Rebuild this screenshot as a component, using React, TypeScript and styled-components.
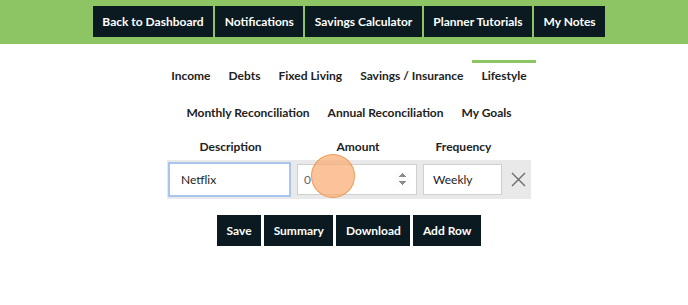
import React from 'react'
import styled, { createGlobalStyle } from 'styled-components'

const GlobalStyle = createGlobalStyle`
  body {
    margin: 0;
    background: #fff;
    font-family: Lato, "Liberation Sans", sans-serif;
    color: #222;
  }
  input[type=number]::-webkit-inner-spin-button {
    opacity: 1;
  }
`

const topLinks = ['Back to Dashboard', 'Notifications', 'Savings Calculator', 'Planner Tutorials', 'My Notes']
const tabsOne = ['Income', 'Debts', 'Fixed Living', 'Savings / Insurance', 'Lifestyle']
const tabsTwo = ['Monthly Reconciliation', 'Annual Reconciliation', 'My Goals']

export default function App() {
    return (
        <Page>
            <GlobalStyle />
            <TopBar>
                {topLinks.map(l => <DarkButton key={l}>{l}</DarkButton>)}
            </TopBar>
            <Main>
                <TabRow $first>
                    {tabsOne.map(t => <Tab key={t} $active={t === 'Lifestyle'}>{t}</Tab>)}
                </TabRow>
                <TabRow>
                    {tabsTwo.map(t => <Tab key={t}>{t}</Tab>)}
                </TabRow>
                <HeaderRow>
                    <HeadCell $w={123}>Description</HeadCell>
                    <HeadCell $w={120}>Amount</HeadCell>
                    <HeadCell $w={79}>Frequency</HeadCell>
                    <HeadCell $w={17} />
                </HeaderRow>
                <Band>
                    <TextInput $w={123} $focused defaultValue="Netflix" />
                    <NumberInput type="number" defaultValue={0} />
                    <TextInput $w={79} defaultValue="Weekly" />
                    <RemoveButton aria-label="remove">
                        <svg width="15" height="15" viewBox="0 0 15 15">
                            <path d="M1 1 L14 14 M14 1 L1 14" stroke="#6b6b6b" strokeWidth="1.4" fill="none" />
                        </svg>
                    </RemoveButton>
                    <ClickMark />
                </Band>
                <Actions>
                    <DarkButton>Save</DarkButton>
                    <DarkButton>Summary</DarkButton>
                    <DarkButton>Download</DarkButton>
                    <DarkButton>Add Row</DarkButton>
                </Actions>
            </Main>
        </Page>
    )
}

const Page = styled.div`
    width: 688px;
    min-height: 305px;
`

const TopBar = styled.div`
    height: 44px;
    box-sizing: border-box;
    padding: 6px 0 0 10px;
    background-color: #8dc565;
    display: flex;
    justify-content: center;
    align-items: flex-start;
    gap: 2px;
`

const DarkButton = styled.button`
    height: 31px;
    padding: 0 9.5px;
    border: none;
    background-color: #0a1a20;
    color: #fff;
    font-family: Lato, "Liberation Sans", sans-serif;
    font-weight: 700;
    font-size: 12px;
    cursor: pointer;
`

const Main = styled.div`
    padding-left: 10px;
    display: flex;
    flex-direction: column;
    align-items: center;
`

const TabRow = styled.div<{ $first?: boolean }>`
    display: flex;
    justify-content: center;
    margin-top: ${p => p.$first ? '16px' : '0'};
`

const Tab = styled.div<{ $active?: boolean }>`
    padding: 5px 9px 13px;
    border-top: 3px solid ${p => p.$active ? '#8dc565' : 'transparent'};
    font-weight: 700;
    font-size: 12px;
    line-height: 16px;
    color: #222;
`

const HeaderRow = styled.div`
    margin-top: 5px;
    display: flex;
    gap: 6px;
    padding: 0 4px 0 1px;
`

const HeadCell = styled.div<{ $w: number }>`
    width: ${p => p.$w}px;
    text-align: center;
    font-weight: 700;
    font-size: 12px;
    line-height: 16px;
`

const Band = styled.div`
    position: relative;
    margin-top: 5px;
    height: 39px;
    box-sizing: border-box;
    padding: 0 4px 0 1px;
    background-color: #e9e9e9;
    display: flex;
    align-items: center;
    gap: 6px;
`

const TextInput = styled.input<{ $w: number; $focused?: boolean }>`
    width: ${p => p.$w}px;
    height: ${p => p.$focused ? 35 : 31}px;
    box-sizing: border-box;
    padding: 0 ${p => p.$focused ? 11 : 9}px;
    border: ${p => p.$focused ? '2px solid #a9c5ee' : '1px solid #cfcfcf'};
    background: #fff;
    font-family: Lato, "Liberation Sans", sans-serif;
    font-size: 12px;
    color: #222;
    outline: none;
`

const NumberInput = styled.input`
    width: 120px;
    height: 31px;
    box-sizing: border-box;
    padding: 0 6px 0 6px;
    border: 1px solid #cfcfcf;
    background: #fff;
    font-family: Lato, "Liberation Sans", sans-serif;
    font-size: 12px;
    color: #666;
    outline: none;
`

const RemoveButton = styled.button`
    margin-left: 2px;
    width: 17px;
    height: 17px;
    padding: 0;
    border: none;
    background: none;
    display: flex;
    align-items: center;
    justify-content: center;
    cursor: pointer;
`

const ClickMark = styled.span`
    position: absolute;
    left: 144px;
    top: -6px;
    width: 44px;
    height: 44px;
    box-sizing: border-box;
    border-radius: 50%;
    background: rgba(250, 170, 110, 0.7);
    border: 1.5px solid rgba(240, 145, 70, 0.85);
    pointer-events: none;
`

const Actions = styled.div`
    margin-top: 16px;
    display: flex;
    gap: 3px;
`
